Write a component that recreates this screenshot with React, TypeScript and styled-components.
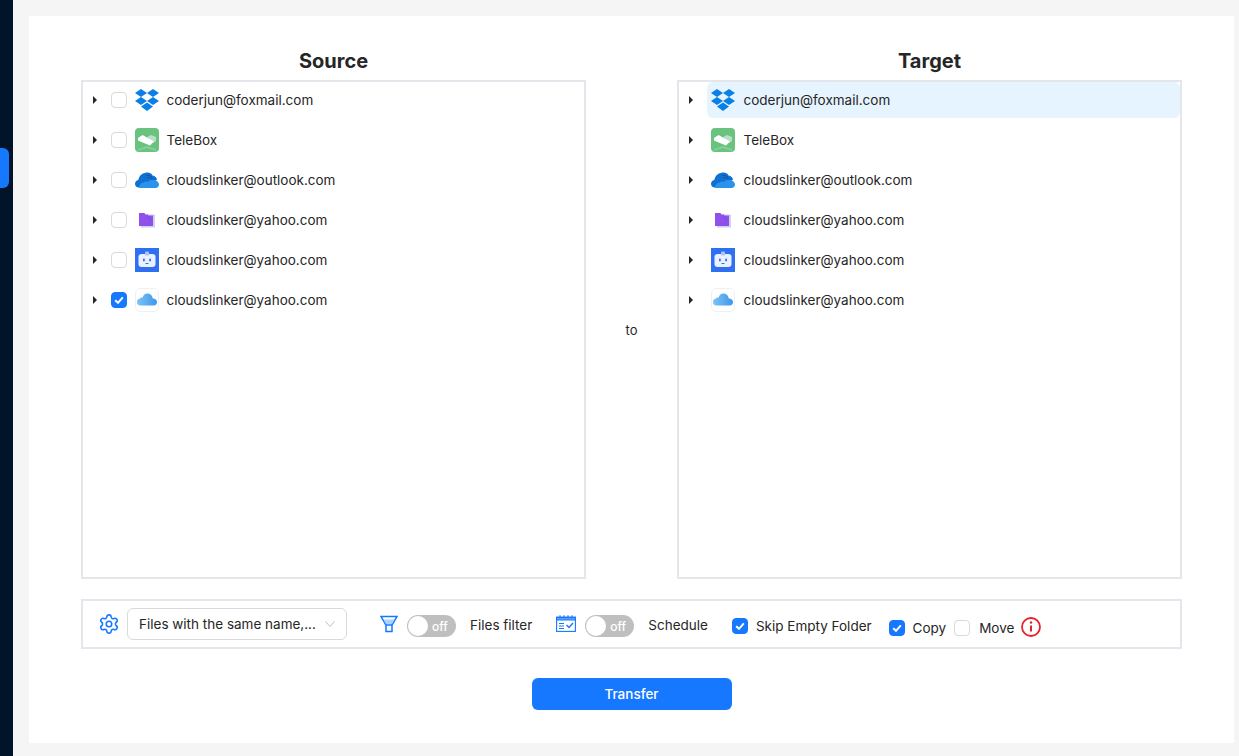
import React from "react";
import styled, { createGlobalStyle } from "styled-components";
import { Settings } from "lucide-react";

const Global = createGlobalStyle`
  html, body { margin: 0; padding: 0; background: #f5f5f5; }
  body { font-family: Inter, "Liberation Sans", sans-serif; color: #262626; }
  * { box-sizing: border-box; }
`;

const Page = styled.div`
  display: flex;
  width: 1239px;
  height: 756px;
  overflow: hidden;
  background: #f5f5f5;
`;
const Sidebar = styled.aside`
  width: 13px;
  flex: none;
  background: #001529;
  padding-top: 148px;
`;
const SideTab = styled.div`
  width: 9px;
  height: 40px;
  background: #1677ff;
  border-radius: 0 6px 6px 0;
`;
const Card = styled.main`
  width: 1205px;
  height: 727px;
  margin: 16px 0 0 16px;
  background: #fff;
  padding: 30px 52px 0 52px;
`;
const Columns = styled.div`
  display: grid;
  grid-template-columns: 505px 91px 505px;
`;
const Column = styled.section`
  display: flex;
  flex-direction: column;
`;
const Title = styled.h2`
  margin: 0;
  height: 34px;
  font-size: 20px;
  line-height: 30px;
  font-weight: 700;
  text-align: center;
  color: #262626;
`;
const Panel = styled.div`
  height: 499px;
  border: 2px solid #e5e6eb;
`;
const Row = styled.div`
  display: flex;
  align-items: center;
  height: 36px;
  margin-bottom: 4px;
`;
const Caret = styled.span`
  width: 0;
  height: 0;
  flex: none;
  margin-left: 9.5px;
  border-left: 4.5px solid #262626;
  border-top: 4px solid transparent;
  border-bottom: 4px solid transparent;
`;
const Box = styled.span<{ $on?: boolean }>`
  width: 16px;
  height: 16px;
  flex: none;
  border-radius: 4px;
  border: 1px solid ${(p) => (p.$on ? "#1677ff" : "#d9d9d9")};
  background: ${(p) => (p.$on ? "#1677ff" : "#fff")};
  display: inline-flex;
  align-items: center;
  justify-content: center;
`;
const SourceBox = styled(Box)`
  margin: 0 8px 0 14px;
`;
const Node = styled.div<{ $active?: boolean }>`
  flex: 1;
  height: 36px;
  margin-left: 14px;
  padding-left: 4px;
  display: flex;
  align-items: center;
  border-radius: 6px;
  background: ${(p) => (p.$active ? "#e6f4ff" : "transparent")};
`;
const SourceNode = styled.div`
  display: flex;
  align-items: center;
`;
const Label = styled.span`
  margin-left: 8px;
  font-size: 13.5px;
  line-height: 22px;
  color: #262626;
  white-space: nowrap;
`;
const TargetLabel = styled(Label)`
  margin-left: 9px;
`;
const Middle = styled.div`
  display: flex;
  align-items: center;
  justify-content: center;
  padding-top: 34px;
  font-size: 13px;
  color: #262626;
`;
const Toolbar = styled.div`
  height: 50px;
  margin-top: 20px;
  border: 2px solid #e5e6eb;
  display: flex;
  align-items: center;
  padding-left: 16px;
  font-size: 13.5px;
  color: #262626;
`;
const Select = styled.div`
  width: 220px;
  height: 32px;
  margin: 0 33px 0 8px;
  padding: 0 11px;
  flex: none;
  display: flex;
  align-items: center;
  justify-content: space-between;
  border: 1px solid #d9d9d9;
  border-radius: 6px;
  font-size: 13.5px;
  white-space: nowrap;
`;
const Toggle = styled.span`
  width: 49px;
  height: 22px;
  flex: none;
  margin: 4px 14px 0 9px;
  border-radius: 11px;
  background: #bfbfbf;
  display: flex;
  align-items: center;
  padding: 0 1px;
  color: #fff;
  font-size: 12px;
  font-weight: 500;
`;
const Knob = styled.span`
  width: 20px;
  height: 20px;
  border-radius: 50%;
  background: #fff;
  margin-right: 4px;
  flex: none;
`;
const ToolText = styled.span<{ $left?: number; $top?: number }>`
  margin-left: ${(p) => p.$left ?? 0}px;
  margin-top: ${(p) => p.$top ?? 0}px;
  white-space: nowrap;
  flex: none;
`;
const ToolIcon = styled.span<{ $left?: number; $top?: number }>`
  display: flex;
  flex: none;
  margin-left: ${(p) => p.$left ?? 0}px;
  margin-top: ${(p) => p.$top ?? 0}px;
`;
const ToolBox = styled(Box)<{ $top: number; $left: number }>`
  margin-top: ${(p) => p.$top}px;
  margin-left: ${(p) => p.$left}px;
`;
const Footer = styled.div`
  display: flex;
  justify-content: center;
  margin-top: 29px;
`;
const Primary = styled.button`
  width: 200px;
  height: 32px;
  border: 0;
  border-radius: 6px;
  background: #1677ff;
  color: #fff;
  font: 500 13.5px Inter, "Liberation Sans", sans-serif;
`;

const Check = () => (
  <svg width="12" height="12" viewBox="0 0 12 12" fill="none">
    <path d="M2.2 6.2 5 8.8l4.8-5.4" stroke="#fff" strokeWidth="2" />
  </svg>
);
const IconSvg = styled.svg`
  flex: none;
  display: block;
`;

const Dropbox = () => (
  <IconSvg width="24" height="24" viewBox="0 0 24 24" fill="#0a7fe6">
    <path d="M6 1 0 5l6 4 6-4zM18 1l-6 4 6 4 6-4zM0 13l6 4 6-4-6-4zM18 9l-6 4 6 4 6-4zM6 18.400 12 23l6-4.600-6-4z" />
  </IconSvg>
);
const Telebox = () => (
  <IconSvg width="24" height="24" viewBox="0 0 24 24">
    <rect width="24" height="24" rx="4" fill="#69c37f" />
    <path d="M3 22l9-3 9 3" stroke="#84cf98" strokeWidth="2" fill="none" />
    <path d="M12 9l4-2 5 2v4l-3.500 2z" fill="#b9e0c5" />
    <path d="M3 10l4.500-3L19 13.500l-4 4L3 12.500z" fill="#fff" />
  </IconSvg>
);
const OneDrive = () => (
  <IconSvg width="24" height="24" viewBox="0 0 24 24">
    <path d="M4 19.500C1.500 19.500 0 17.800 0 15.700c0-2 1.300-3.500 3.300-3.800C4 8.500 6.500 5.500 9.800 5c3-1 6.300-.5 7.700 2.500 2.600.3 4.300 2 4.500 4.300L14 17z" fill="#1170d2" />
    <path d="M4 20h16.500c2 0 3.500-1.500 3.500-3.500 0-2-1.500-3.700-3.800-3.800C18 11.500 15 12 13 14c-1.500-.7-3.500-.5-4.500.7C6.500 14.500 4 16.500 4 20z" fill="#2b93ee" />
    <g fill="#0b3f80">
      <circle cx="12" cy="7.500" r=".6" /><circle cx="14" cy="7.500" r=".6" /><circle cx="16" cy="8.500" r=".6" />
      <circle cx="13" cy="9.500" r=".6" /><circle cx="15" cy="10" r=".6" /><circle cx="17" cy="10.500" r=".6" />
    </g>
  </IconSvg>
);
const Folder = () => (
  <IconSvg width="24" height="24" viewBox="0 0 24 24">
    <rect x="6" y="6.500" width="14" height="13" fill="#c9d2f5" />
    <path d="M4 5h5.500l1.500 2 1.500-1 1 1.500H18V18H4z" fill="#9150ea" />
    <g fill="#6d3bd0">
      <rect x="13" y="9" width="1" height="1" /><rect x="15" y="11" width="1" height="1" />
    </g>
  </IconSvg>
);
const Robot = () => (
  <IconSvg width="24" height="24" viewBox="0 0 24 24">
    <rect width="24" height="24" fill="#2f6ff2" />
    <rect x="3.500" y="6" width="17" height="13" rx="3" fill="#eaf1ff" />
    <rect x="10" y="3.500" width="4" height="4" rx="1" fill="#a9c5fb" />
    <rect x="8" y="10.500" width="1.800" height="3" rx=".9" fill="#2f6ff2" />
    <rect x="14.200" y="10.500" width="1.800" height="3" rx=".9" fill="#2f6ff2" />
    <path d="M10.500 15.500h3" stroke="#2f6ff2" strokeWidth="1" />
  </IconSvg>
);
const ICloud = () => (
  <IconSvg width="24" height="24" viewBox="0 0 24 24">
    <rect x=".5" y=".5" width="23" height="23" rx="4.500" fill="#fff" stroke="#f0f0f0" />
    <defs>
      <linearGradient id="ic" x1="0" y1="0" x2="1" y2="0">
        <stop offset="0" stopColor="#7cc4f5" />
        <stop offset="1" stopColor="#3d96ec" />
      </linearGradient>
    </defs>
    <path d="M5.500 17.500C3.300 17.500 2 16 2 14c0-1.700 1.200-3 2.800-3.200.5-1 1.500-1.400 2.500-1.100C8.300 7 10 5.500 12.500 5.500c3 0 5 2.500 5.300 5 2.500 0 4.200 1.500 4.200 3.500s-1.400 3.500-3 3.500z" fill="url(#ic)" />
  </IconSvg>
);

const GearIcon = styled(Settings)`
  flex: none;
  display: block;
  margin: 0 -1px;
`;
const Funnel = () => (
  <IconSvg width="18" height="18" viewBox="0 0 18 18" fill="none" stroke="#1677ff" strokeWidth="1.500">
    <path d="M1 1.500h16L12 10v6.500H6V10z" />
    <path d="M3.500 4.500h11L12 9H6z" fill="#a9d1ff" stroke="none" />
    <path d="M6 10h6" />
  </IconSvg>
);
const Calendar = () => (
  <IconSvg width="20" height="17" viewBox="0 0 20 17" fill="none" stroke="#1677ff" strokeWidth="1.100">
    <rect x=".6" y="2.100" width="18.800" height="14.300" />
    <path d="M.6 2.500h18.800v2.500H.6z" fill="#5aa5ff" />
    <path d="M4 .3v3M8 .3v3M12 .3v3M16 .3v3" />
    <path d="M3 8.500h5M3 11h5M3 13.500h5" />
    <path d="M10.500 10l2.500 2.500 4-4.500" strokeWidth="1.400" />
  </IconSvg>
);
const Info = () => (
  <IconSvg width="20" height="20" viewBox="0 0 20 20" fill="none" stroke="#e8222a" strokeWidth="1.800">
    <circle cx="10" cy="10" r="9" />
    <path d="M10 8.500v6" strokeWidth="2" />
    <circle cx="10" cy="5.500" r="1.200" fill="#e8222a" stroke="none" />
  </IconSvg>
);
const Chevron = () => (
  <IconSvg width="10" height="10" viewBox="0 0 10 10" fill="none" stroke="#bfbfbf" strokeWidth="1">
    <path d="M.5 2.500 5 7.500l4.500-5" />
  </IconSvg>
);

const accounts = [
  { Icon: Dropbox, name: "coderjun@foxmail.com" },
  { Icon: Telebox, name: "TeleBox" },
  { Icon: OneDrive, name: "cloudslinker@outlook.com" },
  { Icon: Folder, name: "cloudslinker@yahoo.com" },
  { Icon: Robot, name: "cloudslinker@yahoo.com" },
  { Icon: ICloud, name: "cloudslinker@yahoo.com" },
];

const Switch = () => (
  <Toggle>
    <Knob />
    off
  </Toggle>
);

export default function App() {
  return (
    <Page>
      <Global />
      <Sidebar>
        <SideTab />
      </Sidebar>
      <Card>
        <Columns>
          <Column>
            <Title>Source</Title>
            <Panel>
              {accounts.map(({ Icon, name }, i) => (
                <Row key={i}>
                  <Caret />
                  <SourceBox $on={i === 5}>{i === 5 && <Check />}</SourceBox>
                  <SourceNode>
                    <Icon />
                    <Label>{name}</Label>
                  </SourceNode>
                </Row>
              ))}
            </Panel>
          </Column>
          <Middle>to</Middle>
          <Column>
            <Title>Target</Title>
            <Panel>
              {accounts.map(({ Icon, name }, i) => (
                <Row key={i}>
                  <Caret />
                  <Node $active={i === 0}>
                    <Icon />
                    <TargetLabel>{name}</TargetLabel>
                  </Node>
                </Row>
              ))}
            </Panel>
          </Column>
        </Columns>
        <Toolbar>
          <GearIcon size={22} color="#1677ff" strokeWidth={1.7} />
          <Select>
            Files with the same name,...
            <Chevron />
          </Select>
          <Funnel />
          <Switch />
          <ToolText $top={2}>Files filter</ToolText>
          <ToolIcon $left={24} $top={-1}><Calendar /></ToolIcon>
          <Switch />
          <ToolText $top={2}>Schedule</ToolText>
          <ToolBox $on $top={4} $left={24}><Check /></ToolBox>
          <ToolText $left={8} $top={4}>Skip Empty Folder</ToolText>
          <ToolBox $on $top={8} $left={17}><Check /></ToolBox>
          <ToolText $left={8} $top={8}>Copy</ToolText>
          <ToolBox $top={8} $left={8} />
          <ToolText $left={9} $top={8}>Move</ToolText>
          <ToolIcon $left={7} $top={6}><Info /></ToolIcon>
        </Toolbar>
        <Footer>
          <Primary>Transfer</Primary>
        </Footer>
      </Card>
    </Page>
  );
}
